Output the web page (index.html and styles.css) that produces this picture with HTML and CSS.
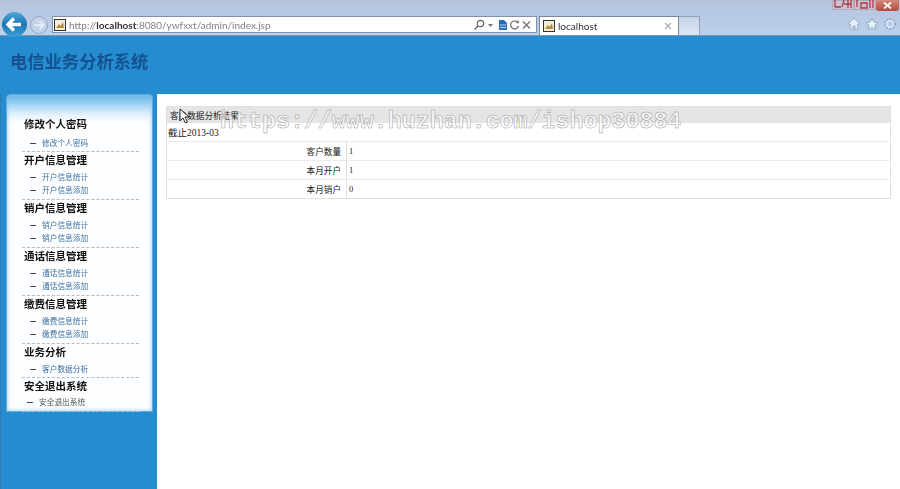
FILE: index.html
```html
<!DOCTYPE html>
<html lang="zh-CN">
<head>
    <meta charset="UTF-8">
    <title>localhost</title>
    <link rel="stylesheet" href="styles.css">
</head>
<body>
    <div class="chrome">
        <div class="nav">
            <svg class="back" width="29" height="29" viewBox="0 0 29 29">
                <defs>
                    <linearGradient id="backfill" x1="0" y1="0" x2="0" y2="1">
                        <stop offset="0" stop-color="#4fa6d8"/>
                        <stop offset="0.5" stop-color="#1b76b4"/>
                        <stop offset="1" stop-color="#3aa2d6"/>
                    </linearGradient>
                </defs>
                <circle cx="14.500" cy="14.500" r="12.500" fill="url(#backfill)"/>
                <path d="M8 14.500h13M14 8.500l-6 6 6 6" fill="none" stroke="#fff" stroke-width="3.400"/>
            </svg>
            <svg class="forward" width="20" height="20" viewBox="0 0 20 20">
                <circle cx="10" cy="10" r="8.500" fill="#c3d4ea" stroke="#93a9c6"/>
                <path d="M5 10h9M10.500 6l4 4-4 4" fill="none" stroke="#eef3fa" stroke-width="1.500"/>
            </svg>
            <div class="address">
                <svg class="favicon" width="12" height="12" viewBox="0 0 12 12">
                    <rect x="0.500" y="0.500" width="11" height="11" fill="#f4efdc" stroke="#333"/>
                    <path d="M2 9l3-4 1.500 2L9 3l1 6z" fill="#b88a3c"/>
                </svg>
                <span class="url">http://<b>localhost</b>:8080/ywfxxt/admin/index.jsp</span>
                <span class="addr-tools">
                    <svg width="13" height="12" viewBox="0 0 13 12"><circle cx="7.500" cy="4.500" r="3.200" fill="none" stroke="#666" stroke-width="1.200"/><path d="M5 7L1.500 10.500" stroke="#666" stroke-width="1.500"/></svg>
                    <svg width="7" height="12" viewBox="0 0 7 12"><path d="M1 5h5L3.500 8z" fill="#777"/></svg>
                    <svg class="compat" width="10" height="12" viewBox="0 0 10 12"><path d="M1 1h5l3 3v7H1z" fill="#2a6bb8"/><path d="M2 6h6M2 8.500h6" stroke="#bcd6f2"/></svg>
                    <svg width="11" height="12" viewBox="0 0 11 12"><path d="M8.800 3.500A4 4 0 1 0 9.500 7" fill="none" stroke="#777" stroke-width="1.300"/><path d="M6.500 3.800l3.300.6V1z" fill="#777"/></svg>
                    <svg width="11" height="12" viewBox="0 0 11 12"><path d="M2 2.500l7 7M9 2.500l-7 7" stroke="#777" stroke-width="1.500"/></svg>
                </span>
            </div>
            <div class="tab">
                <svg class="favicon" width="12" height="12" viewBox="0 0 12 12">
                    <rect x="0.500" y="0.500" width="11" height="11" fill="#f4efdc" stroke="#333"/>
                    <path d="M2 9l3-4 1.500 2L9 3l1 6z" fill="#b88a3c"/>
                </svg>
                <span class="tab-title">localhost</span>
                <svg width="8" height="8" viewBox="0 0 8 8"><path d="M1 1l6 6M7 1L1 7" stroke="#aaa" stroke-width="1.200"/></svg>
            </div>
            <div class="new-tab"></div>
            <div class="tools">
                <svg width="14" height="14" viewBox="0 0 13 13"><path d="M6.500 1L1 6.500h2V12h2.500V8.500h2V12H10V6.500h2z" fill="#e6eef8" stroke="#8fa6c2" stroke-width="0.800"/></svg>
                <svg width="14" height="14" viewBox="0 0 13 13"><path d="M6.500 1l1.700 3.700 4 .4-3 2.700.9 4-3.600-2.100-3.600 2.100.9-4-3-2.700 4-.4z" fill="#e6eef8" stroke="#8fa6c2" stroke-width="0.800"/></svg>
                <svg width="14" height="14" viewBox="0 0 13 13"><circle cx="6.500" cy="6.500" r="4.200" fill="none" stroke="#8fa6c2" stroke-width="2.400" stroke-dasharray="1.600 1.100"/><circle cx="6.500" cy="6.500" r="3.200" fill="none" stroke="#e6eef8" stroke-width="1.200"/></svg>
            </div>
        </div>
        <div class="window-btns">
            <svg class="win-btn" width="22" height="10" viewBox="0 0 22 10"><path d="M3 0v7M3 7h6M12 0l-2 7M16 0v8M19 0v8M12 4h7" fill="none" stroke="#a83a44" stroke-width="1.300"/></svg>
            <svg class="win-btn" width="22" height="10" viewBox="0 0 22 10"><path d="M3 0v7M7 3h6v5H7zM16 0v8M19 0v8" fill="none" stroke="#a83a44" stroke-width="1.300"/></svg>
            <div class="win-close">
                <svg width="9" height="7" viewBox="0 0 9 7"><path d="M1 .5l7 6M8 .5l-7 6" stroke="#fff" stroke-width="1.700"/></svg>
            </div>
        </div>
    </div>

    <div class="header">
        <h1>电信业务分析系统</h1>
    </div>

    <div class="main">
        <div class="left">
            <div class="panel">
                <div class="menu menu-first">
                    <h3>修改个人密码</h3>
                    <ul><li>修改个人密码</li></ul>
                </div>
                <div class="menu">
                    <h3>开户信息管理</h3>
                    <ul><li>开户信息统计</li><li>开户信息添加</li></ul>
                </div>
                <div class="menu">
                    <h3>销户信息管理</h3>
                    <ul><li>销户信息统计</li><li>销户信息添加</li></ul>
                </div>
                <div class="menu">
                    <h3>通话信息管理</h3>
                    <ul><li>通话信息统计</li><li>通话信息添加</li></ul>
                </div>
                <div class="menu">
                    <h3>缴费信息管理</h3>
                    <ul><li>缴费信息统计</li><li>缴费信息添加</li></ul>
                </div>
                <div class="menu menu-single">
                    <h3>业务分析</h3>
                    <ul><li>客户数据分析</li></ul>
                </div>
                <div class="menu menu-last">
                    <h3>安全退出系统</h3>
                    <ul><li>安全退出系统</li></ul>
                </div>
            </div>
        </div>
        <div class="content">
            <table class="result">
                <tr><th colspan="2">客户数据分析结果</th></tr>
                <tr><td colspan="2" class="date">截止2013-03</td></tr>
                <tr><td class="label">客户数量</td><td class="value">1</td></tr>
                <tr><td class="label">本月开户</td><td class="value">1</td></tr>
                <tr><td class="label">本月销户</td><td class="value">0</td></tr>
            </table>
        </div>
    </div>

    <svg class="cursor" width="12" height="17" viewBox="0 0 12 17"><path d="M1 1v12l3-3 2.500 5 2-1-2.500-5h4z" fill="#fff" stroke="#222"/></svg>
    <div class="watermark">https://www.huzhan.com/ishop30884</div>
</body>
</html>
```

FILE: styles.css
```css
html, body { margin: 0; padding: 0; }
body { width: 900px; height: 489px; overflow: hidden; position: relative; font-family: "Liberation Serif", "Noto Sans CJK SC", serif; background: #fff; }

.chrome { height: 36px; box-sizing: border-box; border-bottom: 1px solid #7f95ad; background: linear-gradient(#b4c4dc, #bcd0ec); position: relative; }
.nav { display: flex; align-items: flex-end; height: 35px; }
.back { margin: 0 0 -4px 0; position: relative; z-index: 1; }
.forward { margin: 0 3px 0 0; }
.address { width: 485px; height: 17px; margin-bottom: 2px; box-sizing: border-box; border: 1px solid #8290a6; background: #fff; display: flex; align-items: center; padding: 0 4px 0 1px; }
.url { font: 10px Lato, sans-serif; color: #808080; margin-left: 3px; flex: 1; filter: blur(0.3px); }
.url b { color: #333; font-weight: 700; }
.addr-tools { display: flex; align-items: center; gap: 1px; }
.compat { margin-left: 3px; }
.tab { width: 140px; height: 19px; margin-left: 2px; box-sizing: border-box; border: 1px solid #76879e; border-bottom: 0; background: #fff; display: flex; align-items: center; padding: 0 6px 0 3px; }
.tab-title { font: 10px Lato, sans-serif; color: #333; flex: 1; margin-left: 3px; filter: blur(0.3px); }
.new-tab { width: 21px; height: 19px; box-sizing: border-box; border: 1px solid #8fa3bd; border-left: 0; border-bottom: 0; background: linear-gradient(#c4d3e8, #dfe8f4); }
.tools { margin-left: auto; display: flex; gap: 4px; padding: 0 3px 4px 0; }
.window-btns { position: absolute; top: 0; right: 1px; display: flex; }
.win-btn { display: block; background: #cbc4d4; box-shadow: inset 0 0 0 1px #b5a6b8; }
.win-close { width: 23px; height: 11px; display: flex; align-items: center; justify-content: center; background: linear-gradient(#d2897e, #b8483c); border-radius: 0 0 3px 3px; }

.header { height: 58px; box-sizing: border-box; background: #268cd0; padding-top: 15px; }
.header h1 { margin: 0 0 0 10px; font: bold 17.300px/20px "Noto Sans CJK SC", sans-serif; color: #14518f; filter: blur(0.3px); }

.main { display: flex; height: 395px; border-left: 1px solid #2f7fb5; box-sizing: border-box; }
.left { width: 156px; flex: none; background: #268cd0; padding: 0 0 0 5px; box-sizing: border-box; }
.panel { width: 147px; height: 318px; box-sizing: border-box; border: 1px solid #62ace0; border-radius: 4px 4px 0 0; background: linear-gradient(#62b2e8 0, #b4dcf6 12px, #e4f3fc 20px, #fcfeff 28px); box-shadow: inset 0 0 4px #8cc8ee; padding: 21px 13px 0 15px; }
.menu { border-bottom: 1px dashed #aebccb; }
.menu h3 { margin: 0; font: bold 10.500px/16px "Noto Sans CJK SC", sans-serif; color: #111; padding-left: 2px; filter: blur(0.3px); }
.menu ul { list-style: none; margin: 0; padding: 2px 0 3px 8px; filter: blur(0.35px); }
.menu li { font: 7.700px/13px "Noto Sans CJK SC", sans-serif; color: #3f6f9f; }
.menu li::before { content: ""; display: inline-block; width: 6px; height: 1px; background: #445; vertical-align: middle; margin-right: 6px; }
.menu-first ul { padding-top: 4px; padding-bottom: 2px; }
.menu-single ul { padding-bottom: 2px; }
.menu-last ul { padding: 1px 0 3px 5px; }
.menu-last li { color: #555; }

.content { flex: 1; padding: 11px 9px 0 9px; background: #fff; border-top: 1px solid #e8fbfb; box-sizing: border-box; }
.result { width: 725px; border-collapse: collapse; border: 1px solid #e0e0dc; font: 8.600px "Liberation Serif", "Noto Sans CJK SC", serif; color: #222; }
.result th { height: 16px; padding: 0 0 0 3px; background: #e5e5e5; text-align: left; font-weight: normal; }
.result td { height: 18px; padding: 0 2px; border-top: 1px solid #ebebe7; }
.result .date { border-top: 0; font-size: 9.500px; padding-left: 1px; height: 18px; }
.result .label { width: 172px; text-align: right; padding-right: 5px; border-right: 1px solid #e0e0dc; }

.watermark { position: absolute; left: 220px; top: 108px; font: bold 23.300px/28px "Liberation Mono", monospace; color: rgba(255,255,255,0.6); -webkit-text-stroke: 0.5px #999; white-space: nowrap; }
.cursor { position: absolute; left: 179px; top: 108px; }
```
